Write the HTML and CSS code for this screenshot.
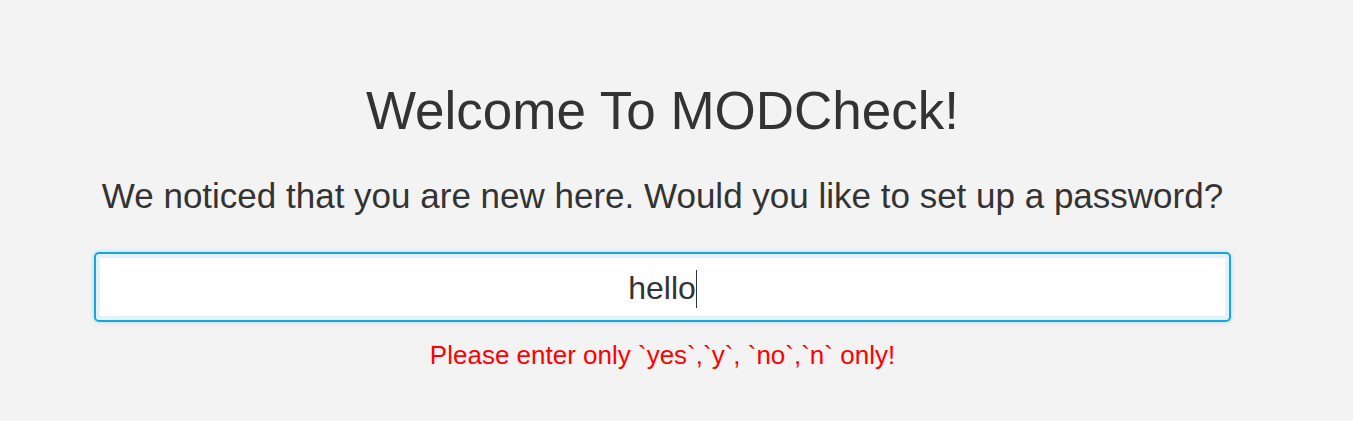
FILE: index.html
```html
<!DOCTYPE html>
<html>
<head>
<meta charset="utf-8">
<link rel="stylesheet" href="styles.css">
</head>
<body>
<main class="page">
  <h1 class="title">Welcome To MODCheck!</h1>
  <p class="subtitle">We noticed that you are new here. Would you like to set up a password?</p>
  <div class="field"><span class="value">hello</span><span class="caret"></span></div>
  <p class="error">Please enter only `yes`,`y`, `no`,`n` only!</p>
</main>
</body>
</html>
```
FILE: styles.css
```css
html, body {
  margin: 0;
  background: #f3f3f3;
}
body {
  font-family: "Liberation Sans", Arial, sans-serif;
  color: #333333;
}
.page {
  width: 1137px;
  margin-left: 94px;
  display: flex;
  flex-direction: column;
  align-items: center;
  padding-top: 79px;
}
.title {
  margin: 0;
  font-weight: normal;
  font-size: 53px;
  line-height: 64px;
}
.subtitle {
  margin: 33px 0 0;
  font-size: 35px;
  line-height: 40px;
}
.field {
  margin-top: 36px;
  box-sizing: border-box;
  width: 1137px;
  height: 70px;
  background: #ffffff;
  border: 2px solid #16a6dc;
  border-radius: 5px;
  box-shadow: inset 0 0 0 4px #e3f2fa, 0 0 4px rgba(22,166,220,0.35);
  display: flex;
  align-items: center;
  justify-content: center;
  font-size: 32px;
  padding-top: 2px;
}
.caret {
  display: inline-block;
  width: 1px;
  height: 38px;
  background: #333;
  margin-top: 2px;
}
.error {
  margin: 18px 0 0;
  color: #ff0000;
  font-size: 26px;
  line-height: 30px;
}
```
